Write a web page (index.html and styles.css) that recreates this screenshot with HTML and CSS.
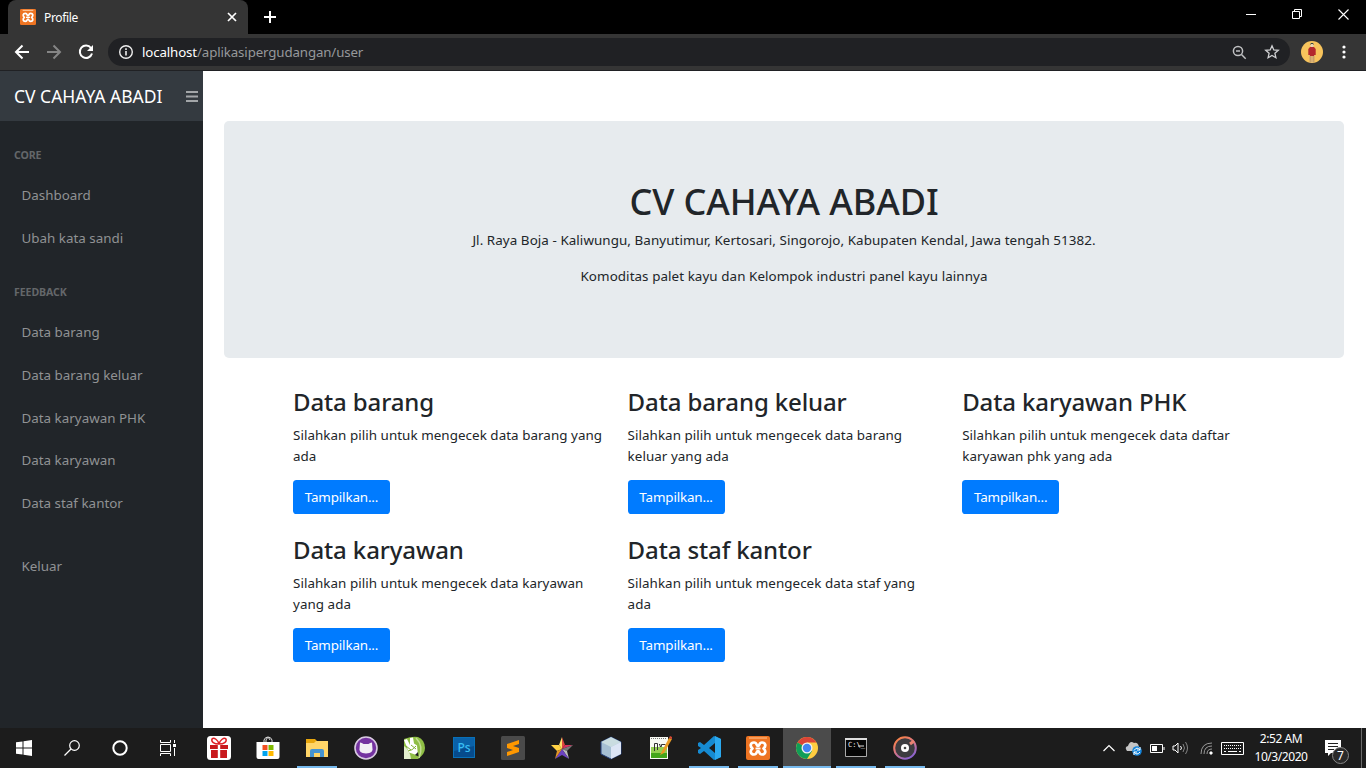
FILE: index.html
```html
<!DOCTYPE html>
<html lang="id">
<head>
<meta charset="utf-8">
<title>Profile</title>
<link rel="stylesheet" href="styles.css">
</head>
<body>
<div class="screen">
  <header class="tabs">
    <div class="tab">
      <svg width="16" height="16" viewBox="0 0 24 24"><rect width="24" height="24" rx="2" fill="#ee7422"/><path d="M4 2H20" stroke="#ffd0a8" stroke-width="1.500"/><path d="M6.500 12.500C3.500 10 4.500 6.500 8 6.500s2 3.500 4 3.500.5-3.500 4-3.500 4.500 3.500 1.500 6c3 2.500 2 6-1.500 6s-2-3.500-4-3.500-.5 3.500-4 3.500-4.500-3.500-1.500-6z" fill="none" stroke="#fff" stroke-width="2.600" stroke-linejoin="round"/><path d="M9 12.500h6" stroke="#fff" stroke-width="2"/></svg>
      <span class="tab-title">Profile</span>
      <svg class="tab-close" width="10" height="10" viewBox="0 0 10 10"><path d="M1 1l8 8M9 1l-8 8" stroke="#fff" stroke-width="1.700"/></svg>
    </div>
    <svg class="newtab" width="12" height="12" viewBox="0 0 12 12"><path d="M6 0v12M0 6h12" stroke="#fff" stroke-width="2"/></svg>
    <div class="wincontrols">
      <svg width="11" height="11" viewBox="0 0 11 11"><path d="M0 5.500h10" stroke="#fff"/></svg>
      <svg width="11" height="11" viewBox="0 0 11 11" fill="none" stroke="#fff"><path d="M.5 2.500h7v7h-7zM2.500 2.500v-2h7v7h-2"/></svg>
      <svg width="11" height="11" viewBox="0 0 11 11"><path d="M.5 .5l10 10M10.500 .5l-10 10" stroke="#fff" stroke-width="1.100"/></svg>
    </div>
  </header>
  <div class="toolbar">
    <svg width="16" height="16" viewBox="0 0 16 16" fill="none" stroke="#fff" stroke-width="2"><path d="M15 8H2M8.500 1.500L2 8l6.500 6.500"/></svg>
    <svg width="16" height="16" viewBox="0 0 16 16" fill="none" stroke="#858585" stroke-width="2"><path d="M1 8h13M7.500 1.500L14 8l-6.500 6.500"/></svg>
    <svg width="16" height="16" viewBox="0 0 16 16"><path d="M13 4A6.200 6.200 0 1 0 14 9.500" fill="none" stroke="#fff" stroke-width="2"/><path d="M15 1v6H9z" fill="#fff"/></svg>
    <div class="address">
      <svg width="16" height="16" viewBox="0 0 16 16"><circle cx="8" cy="8" r="6.300" fill="none" stroke="#eee" stroke-width="1.400"/><path d="M8 7v4.500M8 4.200v1.700" stroke="#eee" stroke-width="1.600"/></svg>
      <span class="url"><b>localhost</b>/aplikasipergudangan/user</span>
      <svg class="mag" width="15" height="15" viewBox="0 0 15 15" fill="none" stroke="#bfc0c2" stroke-width="1.500"><circle cx="6" cy="6" r="4.600"/><path d="M9.500 9.500l4.200 4.200M4 6h4"/></svg>
      <svg width="16" height="16" viewBox="0 0 16 16"><path d="M8 1.800l1.800 4.100 4.500.4-3.400 3 1 4.400L8 11.400l-3.900 2.300 1-4.400-3.400-3 4.500-.4z" fill="none" stroke="#d0d1d3" stroke-width="1.300"/></svg>
    </div>
    <svg class="avatar" width="22" height="22" viewBox="0 0 22 22"><circle cx="11" cy="11" r="11" fill="#f8c45c"/><path d="M8.500 14h5v7.500h-5z" fill="#c9a06a"/><path d="M11 15v7" stroke="#e9c17e"/><path d="M9 6h4l1.700 2v6H13v1H9v-1H7.300V8z" fill="#b3282d"/><circle cx="11" cy="4.500" r="1.600" fill="#e9d5bc"/><path d="M9.300 3.200q1.700-2 3.400 0" stroke="#344" fill="none"/></svg>
    <svg width="4" height="14" viewBox="0 0 4 14" fill="#fff"><circle cx="2" cy="2" r="1.600"/><circle cx="2" cy="7" r="1.600"/><circle cx="2" cy="12" r="1.600"/></svg>
  </div>

  <main class="page">
    <aside class="sidebar">
      <div class="brand"><span>CV CAHAYA ABADI</span>
        <svg width="12" height="11" viewBox="0 0 12 11"><path d="M0 1h12M0 5.500h12M0 10h12" stroke="#a3a6a9" stroke-width="1.800"/></svg>
      </div>
      <nav class="menu">
        <div class="heading core">CORE</div>
        <a>Dashboard</a>
        <a>Ubah kata sandi</a>
        <div class="heading feedback">FEEDBACK</div>
        <a>Data barang</a>
        <a>Data barang keluar</a>
        <a>Data karyawan PHK</a>
        <a>Data karyawan</a>
        <a>Data staf kantor</a>
        <a class="logout">Keluar</a>
      </nav>
    </aside>
    <section class="content">
      <div class="jumbotron">
        <h1>CV CAHAYA ABADI</h1>
        <p>Jl. Raya Boja - Kaliwungu, Banyutimur, Kertosari, Singorojo, Kabupaten Kendal, Jawa tengah 51382.</p>
        <p class="second">Komoditas palet kayu dan Kelompok industri panel kayu lainnya</p>
      </div>
      <div class="cards">
        <article><h2>Data barang</h2><p>Silahkan pilih untuk mengecek data barang yang<br>ada</p><a class="btn">Tampilkan...</a></article>
        <article><h2>Data barang keluar</h2><p>Silahkan pilih untuk mengecek data barang<br>keluar yang ada</p><a class="btn">Tampilkan...</a></article>
        <article><h2>Data karyawan PHK</h2><p>Silahkan pilih untuk mengecek data daftar<br>karyawan phk yang ada</p><a class="btn">Tampilkan...</a></article>
        <article><h2>Data karyawan</h2><p>Silahkan pilih untuk mengecek data karyawan<br>yang ada</p><a class="btn">Tampilkan...</a></article>
        <article><h2>Data staf kantor</h2><p>Silahkan pilih untuk mengecek data staf yang<br>ada</p><a class="btn">Tampilkan...</a></article>
      </div>
    </section>
  </main>

  <footer class="taskbar">
    <div class="apps">
      <div class="sys"><svg width="16" height="16" viewBox="0 0 16 16" fill="#fff"><path d="M0 2.300L6.500 1.400V7.500H0zM7.500 1.200L16 0v7.500H7.500zM0 8.500h6.500v6.100L0 13.700zM7.500 8.500H16V16l-8.500-1.200z"/></svg></div>
      <div class="sys"><svg width="16" height="16" viewBox="0 0 16 16" fill="none" stroke="#fff" stroke-width="1.200"><circle cx="10.500" cy="5.500" r="4.800"/><path d="M7 9L.5 15.500"/></svg></div>
      <div class="sys"><svg width="16" height="16" viewBox="0 0 16 16"><circle cx="8" cy="8" r="6.700" fill="none" stroke="#fff" stroke-width="2"/></svg></div>
      <div class="sys"><svg width="17" height="16" viewBox="0 0 17 16" fill="none" stroke="#fff"><path d="M.5 0v2.500h10V0M.5 16v-2.500h10V16M.5 4.500h10v7H.5zM14.500 0v3M14.500 8v8"/><path d="M13 4h3v3h-3z" fill="#fff" stroke="none"/></svg></div>
      <div class="app first"><svg width="24" height="24" viewBox="0 0 24 24"><rect width="24" height="24" rx="3.500" fill="#fff"/><path d="M3 9h18v4H3zM4 14h16v8H4z" fill="#c8191d"/><path d="M12 9v13" stroke="#fff" stroke-width="2.400"/><path d="M12 8C7 8 4 6 5 3c2-2 6 1 7 5 1-4 5-7 7-5 1 3-2 5-7 5" fill="none" stroke="#df2026" stroke-width="1.500"/></svg></div>
      <div class="app"><svg width="24" height="24" viewBox="0 0 24 24"><path d="M8 8V4q1-3 4-3t4 3v4M10 8V4q2-5 4 0" fill="none" stroke="#ddd"/><path d="M.5 6h23v15q0 2-2 2h-19q-2 0-2-2z" fill="#fff"/><path d="M6.500 9h5v5h-5z" fill="#f25022"/><path d="M12.500 9h5v5h-5z" fill="#7fba00"/><path d="M6.500 15h5v5h-5z" fill="#00a4ef"/><path d="M12.500 15h5v5h-5z" fill="#ffb900"/></svg></div>
      <div class="app open"><svg width="24" height="24" viewBox="0 0 24 24"><path d="M1 3h9l2 2h11v16H1z" fill="#e8a60d"/><path d="M1 7h8l2-2h12v16H1z" fill="#ffd568"/><path d="M5 21v-6q0-2 2-2h10q2 0 2 2v6h-4v-4H9v4z" fill="#4593d1"/></svg></div>
      <div class="app"><svg width="24" height="24" viewBox="0 0 24 24"><circle cx="12" cy="12" r="11" fill="#7433a0" stroke="#d8cbe0" stroke-width="1.600"/><path d="M6 6.500q2 0 3.500 1.500h5Q16 6.500 18 6.500l.3 4q1.700 7-6.300 7t-6.300-7z" fill="#f2eff5"/></svg></div>
      <div class="app"><svg width="24" height="24" viewBox="0 0 24 24"><path d="M1 3Q9 0 15 1q7 3 7 11 0 6-7 11H1z" fill="#8fbe45"/><path d="M13 2q8 8 3 20" stroke="#c2dd92" stroke-width="1.500" fill="none"/><path d="M1 10q6 4 7 13H1z" fill="#e3efcd"/><path d="M1 4l3-1 3 6V2l3-.5 1 6 3 2 1 10-9-3z" fill="#fff"/><path d="M3 10l5 4M8 9l5 4M5 15q4 0 8-5" stroke="#82b037" fill="none"/><path d="M12 19l3-3 .5 4.500z" fill="#222"/></svg></div>
      <div class="app"><svg width="22" height="22" viewBox="0 0 22 22"><rect x=".5" y=".5" width="21" height="20" fill="#064b8c" stroke="#0870b8"/><path d="M1 1h20v8L1 14z" fill="#0a61a8"/><text x="11" y="14.500" text-anchor="middle" class="ps">Ps</text></svg></div>
      <div class="app"><svg width="24" height="24" viewBox="0 0 24 24"><rect width="24" height="24" rx="1.500" fill="#4a4a4a"/><path d="M6 8l12-4v4l-6 2 6 2v4L6 20v-4l6-2-6-2z" fill="#ff9800"/></svg></div>
      <div class="app"><svg width="24" height="24" viewBox="0 0 24 24"><path d="M12 1v12L9 9z" fill="#ffe16c"/><path d="M12 1l3 8-3 4z" fill="#dc473d"/><path d="M15 9h8l-11 4z" fill="#d63160"/><path d="M23 9l-6 6-5-2z" fill="#777"/><path d="M17 15l2 8-7-10z" fill="#bbb"/><path d="M12 13l7 10-7-4-7 4z" fill="#6b42c0"/><path d="M1 9h8l3 4-5 2z" fill="#ffd244"/><path d="M7 15l5-2-7 10z" fill="#e49527"/></svg></div>
      <div class="app"><svg width="24" height="24" viewBox="0 0 24 24"><path d="M12 1l10 5v12l-10 5-10-5V6z" fill="#a6bfd3" stroke="#233d79"/><path d="M12 1l10 5-10 5L2 6z" fill="#c9dce0"/><path d="M12 11l10-5v12l-10 5z" fill="#dce5f5"/></svg></div>
      <div class="app"><svg width="24" height="24" viewBox="0 0 24 24"><path d="M2 1h18v22H2z" fill="#f8faf4"/><path d="M3 11h16v11H3z" fill="#94cf52"/><path d="M3 17h16v5H3z" fill="#43a51a"/><path d="M3 2.500h16" stroke="#777" stroke-dasharray="1 1"/><path d="M6.500 15V7.500h3V14M11 8.500h1v2h1.500v-2h4" fill="none" stroke="#333"/><path d="M13 17L21 2l3 1-8 14-4 2z" fill="#e99b24"/><path d="M21 2l1-2 2 1v2z" fill="#d74835"/></svg></div>
      <div class="app open"><svg width="24" height="24" viewBox="0 0 24 24"><path d="M17 0l7 3v18l-7 3L7 15l-4 3-2-1v-3l3-2-3-2V7l2-1 4 3zM18 7l-6 5 6 5z" fill="#168bd2" fill-rule="evenodd"/><path d="M18 0l6 3v18l-6 3z" fill="#2ba9ef"/></svg></div>
      <div class="app open"><svg width="24" height="24" viewBox="0 0 24 24"><rect width="24" height="24" rx="2" fill="#ee7422"/><path d="M3 2H21" stroke="#ffc594"/><path d="M6.500 12.500C3.500 10 4.500 6.500 8 6.500s2 3.500 4 3.500.5-3.500 4-3.500 4.500 3.500 1.500 6c3 2.500 2 6-1.500 6s-2-3.500-4-3.500-.5 3.500-4 3.500-4.500-3.500-1.500-6z" fill="none" stroke="#fff" stroke-width="2.700" stroke-linejoin="round"/><path d="M9.500 12.500h5" stroke="#fff" stroke-width="2"/></svg></div>
      <div class="app open active"><svg width="24" height="24" viewBox="0 0 24 24"><circle cx="12" cy="12" r="11" fill="#ffcd40"/><path d="M12 12L2.500 6.500A11 11 0 0 1 21.500 6.500H12z" fill="#db4437"/><path d="M2.500 6.500A11 11 0 0 0 12 23l5-8-5-3z" fill="#109d58"/><circle cx="12" cy="12" r="5.500" fill="#f1f1f1"/><circle cx="12" cy="12" r="4.200" fill="#4285f4"/></svg></div>
      <div class="app open"><svg width="24" height="24" viewBox="0 0 24 24"><path d="M1.500 2.500h21v18h-21z" fill="#050505" stroke="#aaa"/><path d="M1 3h22" stroke="#ddd" stroke-width="2"/><text x="4" y="11" class="cmd">C:\_</text><path d="M14 10h6" stroke="#ddd"/></svg></div>
      <div class="app open"><svg width="24" height="24" viewBox="0 0 24 24"><defs><linearGradient id="ring" x2=".6" y2="1"><stop stop-color="#ff8438"/><stop offset=".5" stop-color="#dd777f"/><stop offset="1" stop-color="#8c63cd"/></linearGradient></defs><circle cx="12" cy="12" r="10.800" fill="#3c3c40" stroke="url(#ring)" stroke-width="2"/><circle cx="12" cy="12" r="4" fill="#fff"/><circle cx="12" cy="12" r="1.300" fill="#444"/><path d="M17 8l4-3" stroke="#e88272" stroke-width="3"/></svg></div>
    </div>
    <div class="tray">
      <svg width="12" height="8" viewBox="0 0 12 8"><path d="M.5 7L6 1.500 11.500 7" fill="none" stroke="#fff" stroke-width="1.200"/></svg>
      <svg class="cloud" width="17" height="15" viewBox="0 0 17 15"><path d="M2 10Q-1 6 3 5 5-1 9 2q4-1 5 4v4z" fill="#c5c5c5"/><circle cx="12" cy="10" r="4.800" fill="#1584da"/><path d="M9 9.500Q12 5 15 9M15 11q-3 4-6 0M15 6v3h-3M9 14v-3h3" fill="none" stroke="#fff"/></svg>
      <svg class="battery" width="15" height="9" viewBox="0 0 15 9"><path d="M.5 .5h12v8H.5zM14 3v3" fill="none" stroke="#fff"/><path d="M2 2h5v5H2z" fill="#fff"/></svg>
      <svg class="speaker" width="17" height="14" viewBox="0 0 17 14" fill="none" stroke="#fff"><path d="M1 5h2l3-3v10L3 9H1zM8.500 5q2 2 0 4"/><path d="M11 3q3 4 0 8M13.500 1q4 6 0 12" stroke="#858585"/></svg>
      <svg class="wifi" width="13" height="13" viewBox="0 0 13 13" fill="none" stroke="#999"><path d="M1 12Q1 1 12 1M4 12q0-8 8-8M7 12q0-5 5-5"/><path d="M10 12v-2h2v2z" fill="#fff" stroke="#fff"/></svg>
      <svg class="keyboard" width="23" height="13" viewBox="0 0 23 13" fill="none" stroke="#fff"><path d="M.5 .5h22v12H.5z"/><path d="M3 3.500h17M3 6.500h17" stroke-dasharray="1 1"/><path d="M3 9.500h2M7 9.500h9M18 9.500h2"/></svg>
      <div class="clock"><span>2:52 AM</span><span>10/3/2020</span></div>
      <svg class="notice" width="25" height="26" viewBox="0 0 25 26"><path d="M1 1h16v13H7l-3 3v-3H1z" fill="#fff"/><path d="M4 4.500h10M4 7.500h10M4 10.500h6" stroke="#222"/><circle cx="16.500" cy="16.500" r="8" fill="#2a2a2a" stroke="#888"/><text x="16.500" y="21" text-anchor="middle" class="count">7</text></svg>
      <i class="desktop"></i>
    </div>
  </footer>
</div>
</body>
</html>
```
FILE: styles.css
```css
* { box-sizing: border-box; }
body { margin: 0; font-family: "Noto Sans", "Open Sans", sans-serif; font-size: 13.4px; color: #212529; }
svg { display: block; flex: none; }
.screen { width: 1366px; height: 768px; display: flex; flex-direction: column; overflow: hidden; background: #fff; }
.tabs { height: 34px; flex: none; background: #000; display: flex; padding-left: 8px; }
.tab { width: 240px; background: #353535; border-radius: 8px 8px 0 0; display: flex; align-items: center; padding: 0 12px; color: #fff; font-size: 12px; }
.tab-title { margin-left: 8px; letter-spacing: -.35px; }
.tab-close { margin-left: auto; margin-right: -1px; }
.newtab { margin: 11px 0 0 16px; }
.wincontrols { margin: 9px 17px 0 auto; display: flex; gap: 35px; }
.toolbar { height: 37px; flex: none; background: #353535; border-bottom: 1px solid #202124; display: flex; align-items: center; padding: 0 20px 0 14px; gap: 16px; }
.address { flex: 1; height: 28px; margin-left: -2px; border-radius: 14px; background: #202124; display: flex; align-items: center; padding: 0 10px; }
.url { margin-left: 8px; font-size: 13.3px; letter-spacing: -.13px; color: #96989b; }
.url b { font-weight: 400; color: #fff; }
.mag { margin: 0 17px 0 auto; }
.avatar { margin: 0 3px 0 -5px; }
.page { height: 657px; flex: none; display: flex; }
.sidebar { width: 203px; flex: none; background: #212529; }
.brand { height: 50px; background: #343a40; color: #fff; display: flex; align-items: center; justify-content: space-between; padding: 0 5px 0 14px; font-size: 17.500px; letter-spacing: 0; }
.menu { padding-top: 12px; display: flex; flex-direction: column; }
.menu a { height: 42.750px; line-height: 42px; padding-left: 21.500px; color: #909294; }
.heading { height: 41px; line-height: 45px; padding-left: 14px; font-size: 10.600px; font-weight: 700; color: #64676a; letter-spacing: -.1px; }
.menu .feedback { margin-top: 10.500px; }
.menu .logout { margin-top: 20px; }
.content { flex: 1; padding: 50px 22px 0 21px; }
.jumbotron { height: 237px; border-radius: 5px; background: #e7ebee; padding-top: 57.500px; text-align: center; }
h1, h2, p { margin: 0; font-weight: 500; }
h1 { font-size: 36px; line-height: 46px; letter-spacing: -.1px; }
p { font-weight: 400; line-height: 21px; letter-spacing: .05px; }
.jumbotron p { margin-top: 5px; letter-spacing: .07px; }
.jumbotron .second { margin-top: 15px; }
.cards { display: grid; grid-template-columns: repeat(3, 334.600px); grid-auto-rows: 148px; padding: 28.200px 0 0 69px; }
h2 { font-size: 24px; line-height: 31px; margin-bottom: 8px; letter-spacing: -.12px; }
article p { margin-bottom: 13px; }
.btn { display: block; width: 97px; height: 34px; line-height: 34px; border-radius: 3.600px; background: #007bff; color: #fff; text-align: center; letter-spacing: -.15px; }
.taskbar { height: 40px; flex: none; background: #1c1c1c; display: flex; }
.apps { display: flex; gap: 9px; }
.sys { width: 39px; height: 40px; display: flex; align-items: center; justify-content: center; padding-left: 9px; }
.app { width: 40px; height: 40px; display: flex; align-items: center; justify-content: center; }
.first { margin-left: 7px; }
.open { border-bottom: 2px solid #76b9ed; padding-top: 2px; }
.active { width: 48px; margin: 0 -4px; background: #4b4b4b; }
.tray { margin-left: auto; width: 263px; display: flex; align-items: center; }
.cloud { margin-left: 10px; }
.battery { margin-left: 8px; }
.speaker { margin-left: 7px; }
.wifi { margin-left: 11px; }
.keyboard { margin-left: 8px; }
.clock { width: 52px; margin-left: 11px; display: flex; flex-direction: column; align-items: center; color: #fff; font-size: 12px; line-height: 18px; letter-spacing: -.45px; }
.notice { margin: 8px 0 0 17px; }
.desktop { width: 1px; height: 40px; margin: 0 4px 0 auto; background: #6a6a6a; }
.ps { font: 500 12px "Noto Sans", sans-serif; fill: #38bff4; }
.cmd { font: 7px "DejaVu Sans Mono", monospace; fill: #eee; }
.count { font: 12px "Noto Sans", sans-serif; fill: #fff; }
```
